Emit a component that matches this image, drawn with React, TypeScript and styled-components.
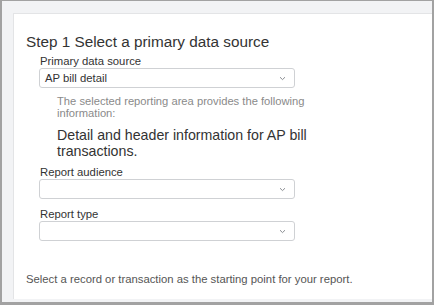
import React from "react"
import styled, { createGlobalStyle } from "styled-components"

const GlobalStyle = createGlobalStyle`
  html, body {
    margin: 0;
    padding: 0;
    background: #ffffff;
    font-family: "Liberation Sans", Arial, sans-serif;
  }
  * {
    box-sizing: border-box;
  }
`

const Frame = styled.div`
  width: 434px;
  height: 305px;
  border-style: solid;
  border-color: #a2a2a2;
  border-width: 1px 2px 3px 2px;
  background: #f2f3f5;
  padding: 12px 0 3px 11px;
  display: flex;
`

const Panel = styled.div`
  flex: 1;
  background: #ffffff;
  border-top: 1px solid #e3e4e6;
  border-left: 1px solid #e3e4e6;
  padding: 19px 0 0 12px;
  display: flex;
  flex-direction: column;
`

const Heading = styled.h2`
  margin: 0;
  font-size: 15.3px;
  line-height: 18px;
  font-weight: normal;
  color: #333333;
`

const Fields = styled.div`
  margin-left: 13px;
  margin-top: 4px;
  display: flex;
  flex-direction: column;
`

const Label = styled.label<{ $gap?: number }>`
  display: block;
  font-size: 11.3px;
  line-height: 13px;
  color: #333333;
  margin-top: ${p => p.$gap ?? 0}px;
  margin-left: 1px;
`

const SelectBox = styled.div`
  width: 256px;
  height: 20px;
  border: 1px solid #cfd1d4;
  border-radius: 3px;
  display: flex;
  align-items: center;
  justify-content: space-between;
  padding: 0 8px 0 5px;
  font-size: 11.3px;
  color: #333333;
  background: #ffffff;
`

const Info = styled.div`
  margin-left: 18px;
  margin-top: 7px;
  width: 275px;
`

const InfoNote = styled.div`
  font-size: 11.2px;
  line-height: 12px;
  color: #8a8a8a;
`

const InfoMain = styled.div`
  margin-top: 8px;
  font-size: 14.2px;
  line-height: 16px;
  color: #333333;
`

const Footer = styled.p`
  margin: auto 0 13px 0;
  font-size: 11.3px;
  line-height: 13px;
  color: #555555;
`

const Chevron = () => (
  <svg width="7" height="5" viewBox="0 0 7 5">
    <path d="M1 1.2 L3.5 3.6 L6 1.2" fill="none" stroke="#8a8d92" strokeWidth="1" />
  </svg>
)

const Select = ({ value }: { value?: string }) => (
  <SelectBox>
    <span>{value}</span>
    <Chevron />
  </SelectBox>
)

export default function App() {
  return (
    <>
      <GlobalStyle />
      <Frame>
        <Panel>
          <Heading>Step 1 Select a primary data source</Heading>
          <Fields>
            <Label>Primary data source</Label>
            <Select value="AP bill detail" />
            <Info>
              <InfoNote>
                The selected reporting area provides the following information:
              </InfoNote>
              <InfoMain>Detail and header information for AP bill transactions.</InfoMain>
            </Info>
            <Label $gap={7}>Report audience</Label>
            <Select />
            <Label $gap={9}>Report type</Label>
            <Select />
          </Fields>
          <Footer>Select a record or transaction as the starting point for your report.</Footer>
        </Panel>
      </Frame>
    </>
  )
}
